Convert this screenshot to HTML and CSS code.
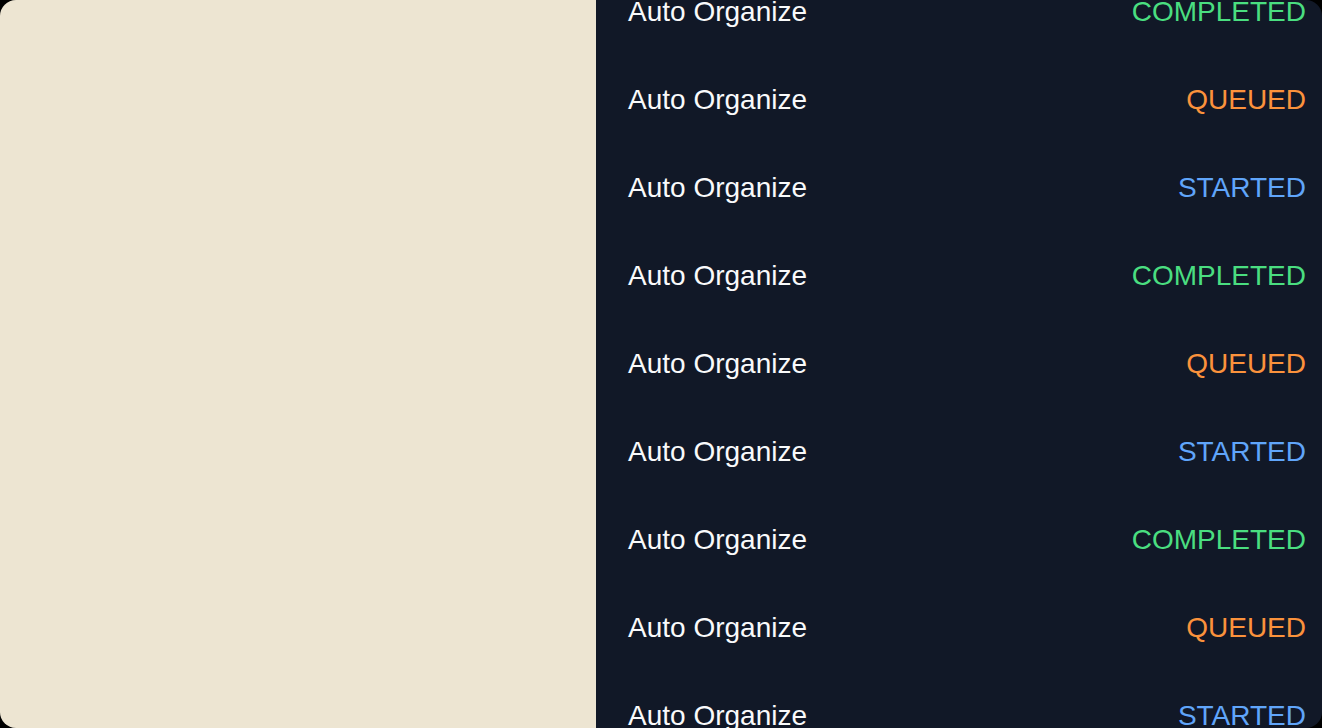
FILE: index.html
```html
<!DOCTYPE html>
<html lang="en">
<head>
    <meta charset="UTF-8">
    <meta name="viewport" content="width=device-width, initial-scale=1.0">
    <title>Tasks</title>
    <link rel="stylesheet" href="styles.css">
</head>
<body>

    <div class="frame">
        <div class="side"></div>

        <div class="tasks">
            <ul class="task-list">
                <li class="task"><span class="name">Auto Organize</span><span class="status completed">COMPLETED</span></li>
                <li class="task"><span class="name">Auto Organize</span><span class="status queued">QUEUED</span></li>
                <li class="task"><span class="name">Auto Organize</span><span class="status started">STARTED</span></li>
                <li class="task"><span class="name">Auto Organize</span><span class="status completed">COMPLETED</span></li>
                <li class="task"><span class="name">Auto Organize</span><span class="status queued">QUEUED</span></li>
                <li class="task"><span class="name">Auto Organize</span><span class="status started">STARTED</span></li>
                <li class="task"><span class="name">Auto Organize</span><span class="status completed">COMPLETED</span></li>
                <li class="task"><span class="name">Auto Organize</span><span class="status queued">QUEUED</span></li>
                <li class="task"><span class="name">Auto Organize</span><span class="status started">STARTED</span></li>
            </ul>
        </div>
    </div>

</body>
</html>
```

FILE: styles.css
```css
html, body {
    margin: 0;
    height: 100%;
    background-color: #000;
}

body {
    font-family: "Liberation Sans", Arial, sans-serif;
}

.frame {
    display: flex;
    height: 728px;
    border-radius: 16px;
    overflow: hidden;
}

.side {
    width: 596px;
    flex-shrink: 0;
    background-color: #ede5d2;
}

.tasks {
    flex: 1;
    background-color: #111827;
    overflow: hidden;
}

.task-list {
    list-style: none;
    margin: -32px 0 0 0;
    padding: 0;
}

.task {
    display: flex;
    justify-content: space-between;
    align-items: center;
    height: 88px;
    padding: 0 16px 0 32px;
    font-size: 28px;
}

.name {
    color: #f9fafb;
}

.completed {
    color: #4ade80;
}

.queued {
    color: #fb923c;
}

.started {
    color: #60a5fa;
}
```
